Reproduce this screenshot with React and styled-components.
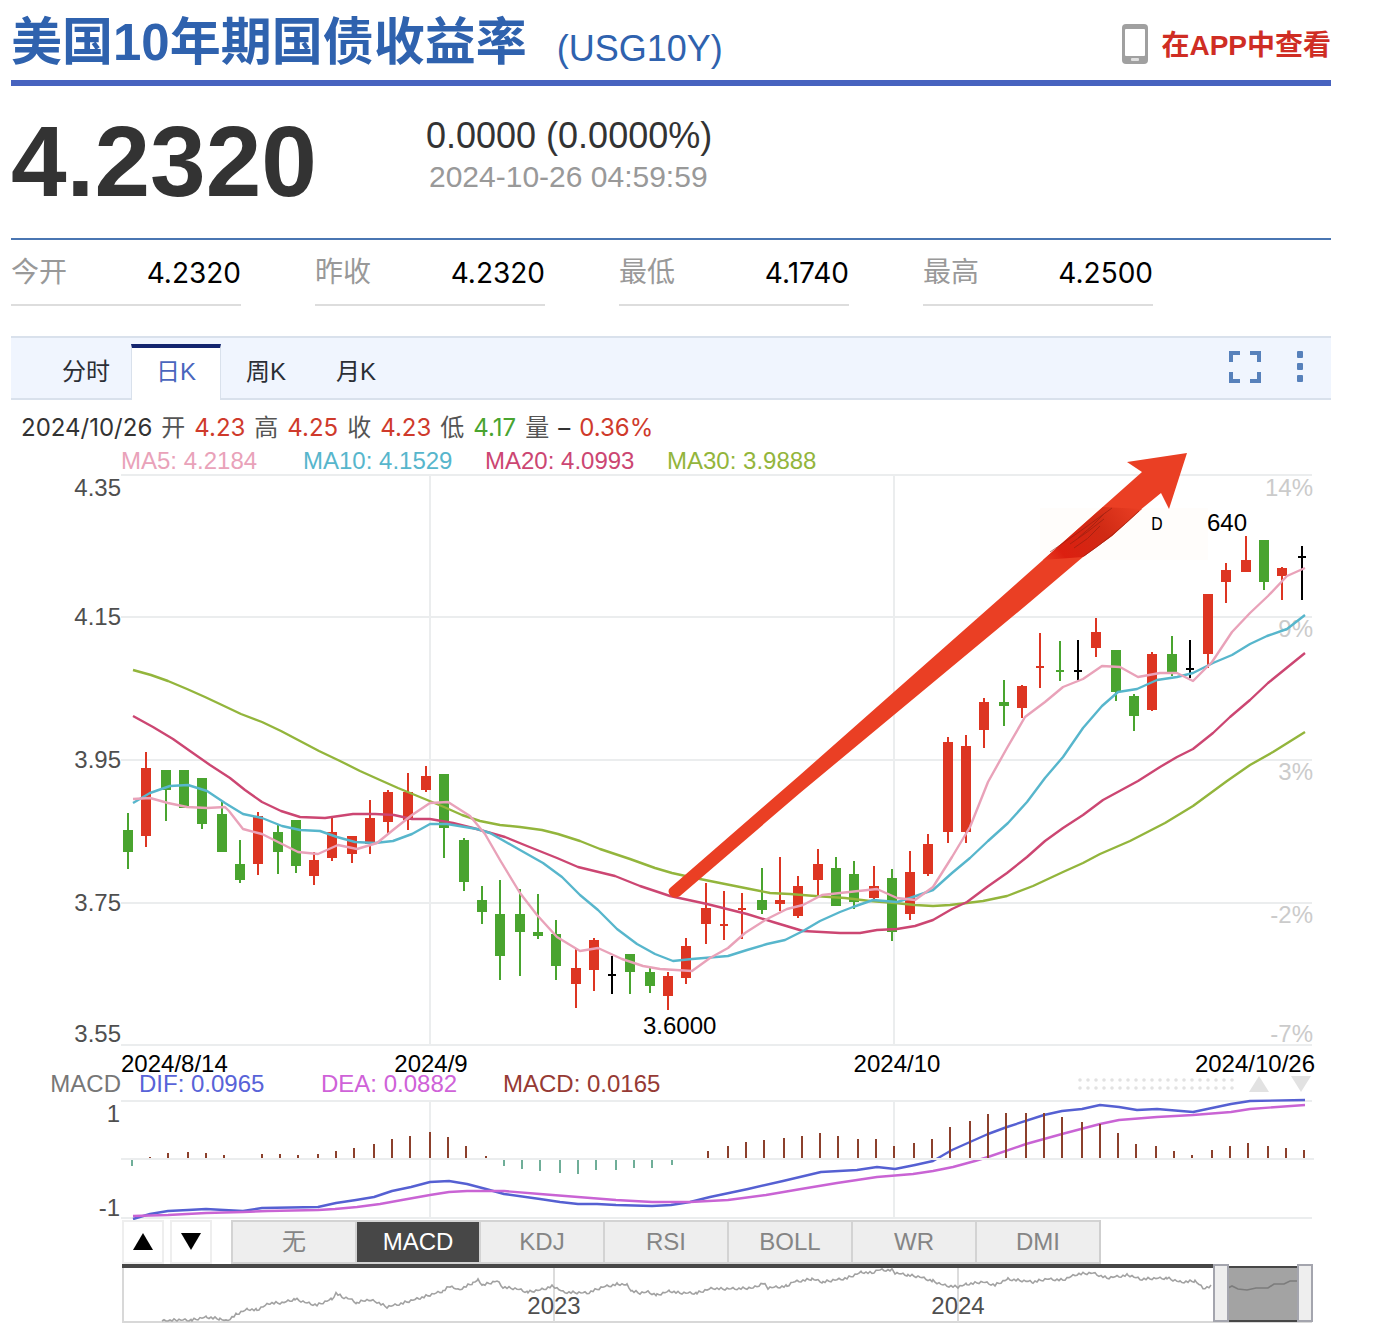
import React, { useState } from "react";
import styled, { createGlobalStyle } from "styled-components";

const RED = "#dd3522";
const GREEN = "#49a42f";
const BLACK = "#000000";

const GlobalStyle = createGlobalStyle`
  * {
    box-sizing: border-box;
  }

  body {
    margin: 0;
    background: #ffffff;
    font-family: "Liberation Sans", "Noto Sans CJK SC", sans-serif;
  }

  button {
    font-family: inherit;
    cursor: pointer;
  }
`;

const stats = [
  { label: "今开", value: "4.2320" },
  { label: "昨收", value: "4.2320" },
  { label: "最低", value: "4.1740" },
  { label: "最高", value: "4.2500" },
];

const periods = ["分时", "日K", "周K", "月K"];
const indicators = ["无", "MACD", "KDJ", "RSI", "BOLL", "WR", "DMI"];

const ohlc = [
  { text: "2024/10/26", color: "#333333" },
  { text: "开", color: "#555555" },
  { text: "4.23", color: "#cf3a2b" },
  { text: "高", color: "#555555" },
  { text: "4.25", color: "#cf3a2b" },
  { text: "收", color: "#555555" },
  { text: "4.23", color: "#cf3a2b" },
  { text: "低", color: "#555555" },
  { text: "4.17", color: "#49a42f" },
  { text: "量", color: "#555555" },
  { text: "–", color: "#333333" },
  { text: "0.36%", color: "#cf3a2b" },
];

const maLegend = [
  { text: "MA5: 4.2184", color: "#e9a2b9" },
  { text: "MA10: 4.1529", color: "#57b6cc" },
  { text: "MA20: 4.0993", color: "#cc4672" },
  { text: "MA30: 3.9888", color: "#93b53c" },
];

const macdLegend = [
  { text: "DIF: 0.0965", color: "#5863d8" },
  { text: "DEA: 0.0882", color: "#cf62d8" },
  { text: "MACD: 0.0165", color: "#963a34" },
];

// x, body top, body bottom, high, low, colour
const candles = [
  [128, 830, 852, 813, 869, GREEN],
  [146, 768, 836, 752, 847, RED],
  [166, 770, 790, 770, 821, GREEN],
  [184, 770, 808, 770, 808, GREEN],
  [202, 778, 824, 778, 829, GREEN],
  [222, 814, 852, 802, 852, GREEN],
  [240, 864, 880, 840, 883, GREEN],
  [258, 816, 864, 812, 875, RED],
  [278, 832, 852, 824, 874, GREEN],
  [296, 820, 866, 820, 873, GREEN],
  [314, 860, 876, 852, 885, RED],
  [332, 832, 858, 816, 861, RED],
  [352, 836, 854, 836, 863, RED],
  [370, 818, 844, 800, 854, RED],
  [388, 792, 822, 790, 833, RED],
  [408, 792, 820, 773, 830, RED],
  [426, 776, 790, 766, 792, RED],
  [444, 774, 828, 774, 858, GREEN],
  [464, 840, 882, 838, 891, GREEN],
  [482, 900, 912, 886, 924, GREEN],
  [500, 914, 956, 880, 980, GREEN],
  [520, 914, 932, 889, 976, GREEN],
  [538, 932, 936, 894, 939, GREEN],
  [556, 934, 966, 920, 980, GREEN],
  [576, 968, 984, 948, 1008, RED],
  [594, 940, 970, 938, 991, RED],
  [612, 974, 976, 956, 994, BLACK],
  [630, 954, 972, 954, 994, GREEN],
  [650, 972, 986, 968, 993, GREEN],
  [668, 976, 996, 972, 1010, RED],
  [686, 946, 978, 938, 984, RED],
  [706, 908, 924, 883, 944, RED],
  [724, 924, 926, 891, 940, RED],
  [742, 908, 910, 893, 939, RED],
  [762, 900, 910, 868, 914, GREEN],
  [780, 900, 904, 857, 911, RED],
  [798, 886, 916, 876, 918, RED],
  [818, 864, 880, 849, 898, RED],
  [836, 868, 906, 857, 906, GREEN],
  [854, 874, 902, 861, 909, GREEN],
  [874, 886, 898, 866, 902, RED],
  [892, 878, 932, 869, 941, GREEN],
  [910, 872, 914, 851, 920, RED],
  [928, 844, 874, 834, 876, RED],
  [948, 742, 832, 737, 843, RED],
  [966, 746, 832, 735, 843, RED],
  [984, 702, 730, 698, 748, RED],
  [1004, 702, 706, 680, 726, GREEN],
  [1022, 686, 708, 685, 718, RED],
  [1040, 666, 668, 633, 688, RED],
  [1060, 670, 672, 641, 681, GREEN],
  [1078, 670, 672, 640, 680, BLACK],
  [1096, 632, 648, 618, 657, RED],
  [1116, 650, 692, 650, 701, GREEN],
  [1134, 696, 716, 694, 731, GREEN],
  [1152, 654, 710, 652, 711, RED],
  [1172, 654, 672, 636, 676, GREEN],
  [1190, 668, 670, 640, 678, BLACK],
  [1208, 594, 654, 594, 668, RED],
  [1226, 570, 582, 563, 603, RED],
  [1246, 560, 572, 536, 572, RED],
  [1264, 540, 582, 540, 590, GREEN],
  [1282, 568, 576, 567, 600, RED],
  [1302, 556, 558, 546, 600, BLACK],
];

const ma30 =
  "133,670 151,675 168,681 187,689 205,697 222,705 241,714 262,722 281,731 300,741 319,751 340,761 360,771 380,780 398,788 415,795 432,802 444,807 462,815 480,821 500,825 520,827 542,830 558,834 580,841 600,849 630,859 655,868 672,873 690,877 720,883 750,889 770,893 790,894 815,896 845,898 870,901 895,903 915,905 933,906 950,905 967,903 983,901 1007,896 1033,886 1063,872 1083,863 1100,854 1130,841 1165,823 1193,806 1227,781 1250,765 1273,752 1305,732";
const ma20 =
  "133,716 153,727 173,739 190,751 210,765 230,778 245,790 262,802 281,811 300,817 325,818 353,814 375,814 394,815 412,819 430,819 453,823 473,828 505,837 527,846 557,858 578,867 615,876 640,886 670,896 707,904 747,914 773,922 803,931 840,933 860,933 877,930 897,929 915,926 933,920 952,909 967,902 987,887 1007,873 1027,857 1045,841 1063,828 1083,815 1103,800 1138,781 1160,767 1177,757 1193,749 1213,733 1230,717 1250,700 1268,683 1305,653";
const ma10 =
  "133,803 150,793 170,786 188,785 207,791 225,803 243,814 262,818 282,826 300,830 320,831 337,837 355,842 375,843 393,841 412,834 430,824 447,824 477,829 490,833 520,850 543,863 562,877 580,895 598,910 617,929 637,944 655,954 673,961 692,959 728,956 747,950 767,944 785,940 803,931 820,921 840,912 853,907 873,900 897,902 910,898 933,890 952,873 970,858 988,841 1008,823 1027,802 1045,778 1063,757 1083,728 1102,706 1118,692 1137,689 1157,680 1177,677 1193,673 1213,663 1232,655 1250,644 1267,636 1287,629 1305,615";
const ma5 =
  "133,799 150,798 168,803 187,807 207,808 225,807 229,811 243,829 262,834 280,843 298,852 318,854 338,845 357,849 377,843 393,830 412,815 430,803 448,802 470,816 485,834 500,860 520,893 537,915 557,937 580,951 598,948 622,959 643,966 660,969 692,971 710,958 728,948 745,933 767,919 787,909 803,905 822,895 840,893 877,889 897,898 915,900 933,887 952,857 970,827 988,782 1007,748 1025,717 1045,702 1063,687 1083,679 1102,666 1120,667 1138,677 1160,673 1177,673 1193,681 1212,662 1232,632 1250,613 1268,596 1287,576 1305,568";

// x, signed bar height
const macdBars = [
  [132, -6], [150, 1], [168, 5], [188, 6], [206, 5], [224, 3], [262, 4],
  [280, 4], [298, 3], [318, 4], [336, 7], [354, 10], [374, 14], [392, 19],
  [410, 22], [430, 26], [448, 21], [466, 12], [486, 2], [504, -6],
  [522, -9], [540, -11], [560, -13], [578, -14], [596, -10], [616, -10],
  [634, -8], [652, -8], [672, -5], [708, 7], [728, 12], [746, 16],
  [764, 18], [784, 20], [802, 22], [820, 25], [838, 22], [858, 19],
  [876, 19], [894, 12], [914, 15], [932, 19], [950, 31], [970, 37],
  [988, 44], [1006, 45], [1026, 45], [1044, 45], [1062, 41], [1082, 36],
  [1100, 34], [1118, 25], [1136, 14], [1156, 12], [1174, 7], [1192, 3],
  [1212, 8], [1230, 12], [1248, 15], [1268, 12], [1286, 10], [1304, 8],
];

const dif =
  "133,1219 150,1214 168,1211 188,1210 206,1209 224,1210 243,1211 262,1208 318,1207 336,1203 356,1200 374,1197 392,1191 411,1187 430,1182 449,1181 467,1184 486,1189 504,1194 540,1199 560,1202 578,1204 597,1204 616,1205 652,1206 671,1205 690,1202 710,1197 748,1189 783,1181 821,1172 857,1170 877,1167 895,1169 915,1165 933,1161 952,1150 970,1142 988,1134 1007,1127 1044,1115 1062,1111 1082,1109 1100,1105 1119,1107 1137,1110 1157,1109 1193,1112 1231,1104 1250,1101 1305,1100";
const dea =
  "133,1216 168,1215 206,1213 243,1212 268,1211 318,1210 335,1209 357,1207 380,1204 402,1200 430,1195 449,1192 467,1191 504,1191 540,1194 578,1197 616,1200 652,1202 690,1202 728,1200 766,1195 801,1189 837,1183 877,1177 913,1174 933,1171 953,1167 975,1161 988,1157 1026,1144 1062,1134 1100,1124 1119,1120 1157,1117 1193,1115 1231,1112 1250,1109 1305,1105";

const history = [
  [162, 1321], [177, 1320], [192, 1320], [207, 1317], [220, 1319], [226, 1321],
  [237, 1314], [248, 1309], [257, 1310], [270, 1303], [282, 1303], [295, 1299],
  [307, 1303], [317, 1305], [332, 1299], [336, 1293], [342, 1297], [350, 1299],
  [357, 1303], [365, 1300], [375, 1301], [387, 1307], [403, 1303], [420, 1298],
  [443, 1291], [450, 1286], [458, 1290], [473, 1283], [478, 1280], [483, 1285],
  [497, 1281], [503, 1287], [517, 1289], [528, 1292], [540, 1290], [553, 1286],
  [563, 1292], [587, 1293], [603, 1287], [618, 1284], [627, 1285], [632, 1291],
  [640, 1293], [648, 1292], [657, 1295], [670, 1291], [680, 1293], [697, 1293],
  [713, 1288], [723, 1289], [753, 1288], [763, 1283], [768, 1288], [787, 1286],
  [793, 1282], [812, 1279], [823, 1282], [847, 1278], [862, 1272], [872, 1273],
  [878, 1270], [893, 1270], [895, 1273], [908, 1275], [920, 1277], [933, 1281],
  [943, 1285], [958, 1287], [967, 1284], [983, 1282], [995, 1285], [1008, 1279],
  [1033, 1282], [1047, 1279], [1063, 1280], [1077, 1274], [1093, 1273],
  [1107, 1278], [1128, 1275], [1140, 1279], [1167, 1278], [1180, 1282],
  [1195, 1281], [1203, 1288], [1213, 1286],
];

const noise = [0, -1.1, 0.7, 1.2, -0.5, 0.9, -1.3, 0.3, 1.1, -0.8, 0.2];

const historyLine = () => {
  const points = [];
  let n = 0;
  for (let i = 0; i < history.length - 1; i++) {
    const [x1, y1] = history[i];
    const [x2, y2] = history[i + 1];
    for (let x = x1; x < x2; x += 2) {
      const y = y1 + ((y2 - y1) * (x - x1)) / (x2 - x1);
      points.push(`${x},${Math.min(1321, y + noise[n % noise.length])}`);
      n += 1;
    }
  }
  return points.join(" ");
};

const Candle = ({ data }) => {
  const [x, top, bottom, high, low, color] = data;
  const half = bottom - top > 2 ? 5 : 4;
  return (
    <g fill={color}>
      <rect x={x - 1} y={high} width="2" height={low - high} />
      <rect x={x - half} y={top} width={half * 2} height={bottom - top} />
    </g>
  );
};

const PriceChart = () => (
  <Plot viewBox="11 474 1320 598">
    <g stroke="#ebedee" strokeWidth="2">
      {[475, 617, 760, 903, 1045].map((y) => (
        <line key={y} x1="121" x2="1312" y1={y} y2={y} />
      ))}
      <line x1="430" x2="430" y1="475" y2="1045" />
      <line x1="894" x2="894" y1="475" y2="1045" />
    </g>
    <g fill="#4f4f4f" textAnchor="end">
      <text x="121" y="496">4.35</text>
      <text x="121" y="625">4.15</text>
      <text x="121" y="768">3.95</text>
      <text x="121" y="911">3.75</text>
      <text x="121" y="1042">3.55</text>
    </g>
    <g fill="#cbcbcb" textAnchor="end">
      <text x="1313" y="496">14%</text>
      <text x="1313" y="637">9%</text>
      <text x="1313" y="780">3%</text>
      <text x="1313" y="923">-2%</text>
      <text x="1313" y="1042">-7%</text>
    </g>
    <rect x="1040" y="508" width="168" height="52" fill="#fffdfb" />
    {candles.map((c) => (
      <Candle key={c[0]} data={c} />
    ))}
    <g fill="none" strokeWidth="2.4" strokeLinejoin="round">
      <polyline points={ma30} stroke="#93b53c" />
      <polyline points={ma20} stroke="#cc4672" />
      <polyline points={ma10} stroke="#57b6cc" />
      <polyline points={ma5} stroke="#e9a2b9" />
    </g>
    <TrendArrow />
    <g fill="#000000">
      <text x="643" y="1034">3.6000</text>
      <text x="1207" y="531">640</text>
      <SmallMark x="1151" y="530">D</SmallMark>
      <text x="121" y="1072">2024/8/14</text>
      <text x="431" y="1072" textAnchor="middle">2024/9</text>
      <text x="897" y="1072" textAnchor="middle">2024/10</text>
      <text x="1315" y="1072" textAnchor="end">2024/10/26</text>
    </g>
  </Plot>
);

const TrendArrow = () => (
  <g>
    <defs>
      <linearGradient
        id="smudge"
        gradientUnits="userSpaceOnUse"
        x1="1044"
        y1="566"
        x2="1136"
        y2="500"
      >
        <stop offset="0" stopColor="#ea3f24" />
        <stop offset="0.2" stopColor="#dc1f10" />
        <stop offset="0.6" stopColor="#d02a14" />
        <stop offset="1" stopColor="#ea3f24" />
      </linearGradient>
    </defs>
    <path
      d="M670 888 L800 775 L998 600 L1142 472 L1127 462 L1187 453 L1169 509 L1161 493 L1139 511 L1112 536 L1083 557 L1030 602 L800 793 L680 896 Q674 900 670 895 Q667 891 670 888 Z"
      fill="#ea3f24"
    />
    <path
      d="M1043 560 L1103 507 L1142 509 L1112 536 L1083 557 Z"
      fill="url(#smudge)"
    />
    <g stroke="#8f1e10" strokeWidth="1" fill="none" opacity="0.6">
      <path d="M1050 552 Q1080 532 1112 508" />
      <path d="M1078 538 Q1092 527 1106 512" />
      <path d="M1070 544 Q1088 532 1104 519" />
      <path d="M1074 548 Q1088 540 1100 526" />
      <path d="M1084 556 Q1112 537 1139 511" />
    </g>
  </g>
);

const MacdChart = () => (
  <Plot viewBox="11 1096 1320 124">
    <g stroke="#ebedee" strokeWidth="2">
      <line x1="121" x2="1312" y1="1101" y2="1101" />
      <line x1="121" x2="1312" y1="1218" y2="1218" />
      <line x1="430" x2="430" y1="1101" y2="1218" />
      <line x1="894" x2="894" y1="1101" y2="1218" />
    </g>
    <g fill="#4f4f4f" textAnchor="end">
      <text x="120" y="1122">1</text>
      <text x="120" y="1216">-1</text>
    </g>
    <g fill="none" strokeWidth="2.4" strokeLinejoin="round">
      <polyline points={dif} stroke="#5560d2" />
      <polyline points={dea} stroke="#c964d4" />
    </g>
    <rect x="121" y="1158" width="1193" height="2" fill="#ebedee" />
    {macdBars.map(([x, h]) => (
      <rect
        key={x}
        x={x - 1}
        y={h > 0 ? 1158 - h : 1160}
        width="2"
        height={Math.abs(h)}
        fill={h > 0 ? "#8c402c" : "#6fae98"}
      />
    ))}
  </Plot>
);

const HistoryChart = () => (
  <Plot viewBox="122 1264 1190 59">
    <path d="M123 1268 V1322 H1312" stroke="#d8d8d8" strokeWidth="2" fill="none" />
    <rect x="122" y="1264" width="1092" height="4" fill="#474747" />
    <line x1="554" x2="554" y1="1268" y2="1322" stroke="#dcdcdc" strokeWidth="2" />
    <line x1="958" x2="958" y1="1268" y2="1322" stroke="#dcdcdc" strokeWidth="2" />
    <rect x="1227" y="1266" width="72" height="56" fill="#a3a3a3" />
    <rect x="1227" y="1266" width="72" height="2" fill="#474747" />
    <rect x="1227" y="1320" width="72" height="2" fill="#474747" />
    <polyline points={historyLine()} fill="none" stroke="#a2a2a2" strokeWidth="1.6" />
    <polyline
      points="1228,1288 1232,1286 1238,1289 1247,1290 1256,1288 1268,1288 1274,1284 1284,1284 1290,1281 1297,1281"
      fill="none"
      stroke="#7c7c7c"
      strokeWidth="1.6"
    />
    <g fill="#4f4f4f" textAnchor="middle">
      <text x="554" y="1314">2023</text>
      <text x="958" y="1314">2024</text>
    </g>
    <g fill="#eeeeee" stroke="#a4a5ae" strokeWidth="2">
      <rect x="1214" y="1265" width="14" height="56" />
      <rect x="1298" y="1265" width="14" height="56" />
    </g>
  </Plot>
);

const PhoneIcon = () => (
  <svg width="28" height="42" viewBox="0 0 28 42" aria-hidden="true">
    <path
      d="M5 1 H23 Q27 1 27 5 V37 Q27 41 23 41 H5 Q1 41 1 37 V5 Q1 1 5 1 Z"
      fill="#a0a0a0"
    />
    <rect x="4" y="6" width="20" height="27" rx="1" fill="#ffffff" />
    <rect x="10" y="35" width="8" height="3" rx="1" fill="#e0e0e0" />
  </svg>
);

const App = () => {
  const [period, setPeriod] = useState("日K");
  const [indicator, setIndicator] = useState("MACD");

  return (
    <Page>
      <GlobalStyle />
      <Header>
        <Title>
          美国10年期国债收益率 <Symbol>(USG10Y)</Symbol>
        </Title>
        <AppLink href="#app">
          <PhoneIcon />
          在APP中查看
        </AppLink>
      </Header>

      <Quote>
        <Price>4.2320</Price>
        <div>
          <Change>0.0000 (0.0000%)</Change>
          <QuoteTime>2024-10-26 04:59:59</QuoteTime>
        </div>
      </Quote>

      <Stats>
        {stats.map((s) => (
          <Stat key={s.label}>
            <dt>{s.label}</dt>
            <dd>{s.value}</dd>
          </Stat>
        ))}
      </Stats>

      <TabBar>
        {periods.map((p) => (
          <Tab key={p} $active={p === period} onClick={() => setPeriod(p)}>
            {p}
          </Tab>
        ))}
        <Tools>
          <IconButton aria-label="全屏">
            <svg width="34" height="34" viewBox="0 0 34 34">
              <path
                d="M3 12 V3 H12 M22 3 H31 V12 M31 22 V31 H22 M12 31 H3 V22"
                fill="none"
                stroke="#5781bb"
                strokeWidth="4"
              />
            </svg>
          </IconButton>
          <IconButton aria-label="更多">
            <svg width="8" height="34" viewBox="0 0 8 34" fill="#5781bb">
              <rect x="1" y="1" width="6" height="7" rx="1" />
              <rect x="1" y="13" width="6" height="7" rx="1" />
              <rect x="1" y="25" width="6" height="7" rx="1" />
            </svg>
          </IconButton>
        </Tools>
      </TabBar>

      <Ohlc>
        {ohlc.map((o, i) => (
          <Colored key={i} $color={o.color}>
            {o.text}
          </Colored>
        ))}
      </Ohlc>
      <MaLegend>
        {maLegend.map((m) => (
          <Colored key={m.text} $color={m.color}>
            {m.text}
          </Colored>
        ))}
      </MaLegend>
      <PriceChart />

      <MacdHeader>
        <PanelName>MACD</PanelName>
        {macdLegend.map((m) => (
          <Colored key={m.text} $color={m.color}>
            {m.text}
          </Colored>
        ))}
        <svg width="234" height="16" viewBox="0 0 234 16" fill="#e2e2e2" aria-hidden="true">
          {Array.from({ length: 20 }, (_, i) => (
            <g key={i}>
              <circle cx={2 + i * 8} cy="4" r="1.8" />
              <circle cx={2 + i * 8} cy="12" r="1.8" />
            </g>
          ))}
          <path d="M171 16 L181 0 L191 16 Z" />
          <path d="M213 0 H233 L223 16 Z" />
        </svg>
      </MacdHeader>
      <MacdChart />

      <Footer>
        <IndicatorBar>
          <StepButton aria-label="上一个">
            <svg width="20" height="18" viewBox="0 0 20 18">
              <path d="M10 0 L20 17 H0 Z" />
            </svg>
          </StepButton>
          <StepButton aria-label="下一个">
            <svg width="20" height="18" viewBox="0 0 20 18">
              <path d="M0 0 H20 L10 17 Z" />
            </svg>
          </StepButton>
          <IndicatorTabs>
            {indicators.map((name) => (
              <IndicatorTab
                key={name}
                $active={name === indicator}
                onClick={() => setIndicator(name)}
              >
                {name}
              </IndicatorTab>
            ))}
          </IndicatorTabs>
        </IndicatorBar>
        <HistoryChart />
      </Footer>
    </Page>
  );
};

const Page = styled.main`
  padding: 0 57px 20px 11px;
  font-size: 24px;
  line-height: 28px;
`;

const Header = styled.header`
  display: flex;
  justify-content: space-between;
  align-items: center;
  height: 86px;
  border-bottom: 6px solid #4763bf;
`;

const Title = styled.h1`
  display: flex;
  align-items: flex-end;
  gap: 30px;
  margin: 0;
  padding-top: 6px;
  font-size: 51px;
  line-height: 74px;
  color: #2f62ae;
`;

const Symbol = styled.span`
  font-size: 36px;
  font-weight: 400;
  line-height: 62px;
`;

const AppLink = styled.a`
  display: flex;
  align-items: flex-end;
  gap: 12px;
  padding-top: 8px;
  font-size: 28px;
  font-weight: 700;
  line-height: 38px;
  color: #cf2d24;
  text-decoration: none;
`;

const Quote = styled.section`
  display: grid;
  grid-template-columns: 415px 1fr;
  padding: 30px 0 31px;
  border-bottom: 2px solid #4a76b2;
`;

const Price = styled.strong`
  font-size: 100px;
  line-height: 91px;
  color: #333333;
`;

const Change = styled.div`
  font-size: 36px;
  line-height: 40px;
  color: #333333;
`;

const QuoteTime = styled.time`
  display: block;
  padding-left: 3px;
  font-size: 30px;
  line-height: 42px;
  color: #999999;
`;

const Stats = styled.dl`
  display: flex;
  gap: 74px;
  margin: 0 0 30px;
`;

const Stat = styled.div`
  display: flex;
  justify-content: space-between;
  width: 230px;
  padding-top: 2px;
  border-bottom: 2px solid #dddddd;
  font-size: 28px;
  line-height: 62px;

  dt {
    color: #999999;
  }

  dd {
    margin: 0;
    font-family: Inter, sans-serif;
    color: #000000;
  }
`;

const TabBar = styled.nav`
  display: flex;
  align-items: flex-end;
  height: 64px;
  padding-left: 30px;
  border-top: 2px solid #d9e1ec;
  background: #f0f5fe;
  box-shadow: inset 0 -2px #d9e1ec;
`;

const Tab = styled.button`
  width: 90px;
  height: 56px;
  padding: 0 0 9px;
  border: solid ${(p) => (p.$active ? "#d9e1ec" : "transparent")};
  border-width: 0 1px;
  border-top: 4px solid ${(p) => (p.$active ? "#14256f" : "transparent")};
  background: ${(p) => (p.$active ? "#ffffff" : "transparent")};
  font-size: 24px;
  color: ${(p) => (p.$active ? "#4a66bd" : "#2b2e35")};
`;

const Tools = styled.div`
  display: flex;
  align-items: center;
  align-self: center;
  gap: 34px;
  margin-left: auto;
  padding: 0 27px 5px 0;
`;

const IconButton = styled.button`
  padding: 0;
  border: 0;
  background: none;

  svg {
    display: block;
  }
`;

const Colored = styled.span`
  color: ${(p) => p.$color};
`;

const Ohlc = styled.div`
  display: flex;
  gap: 9px;
  padding: 9px 0 0 10px;
  font-family: Inter, "Noto Sans CJK SC", sans-serif;
  font-size: 24px;
  line-height: 38px;
`;

const MaLegend = styled.div`
  display: grid;
  grid-template-columns: repeat(4, 182px);
  padding-left: 110px;
  line-height: 27px;
`;

const Plot = styled.svg`
  display: block;
  width: 100%;
  height: auto;
  overflow: visible;
  font-size: 24px;
`;

const SmallMark = styled.text`
  font-family: "Liberation Sans Narrow", "DejaVu Sans Condensed", sans-serif;
  font-size: 17px;
`;

const MacdHeader = styled.div`
  display: grid;
  grid-template-columns: 110px 182px 182px 1fr auto;
  align-items: center;
  padding-right: 19px;
  line-height: 24px;

  ${Colored} {
    padding-left: 18px;
  }
`;

const PanelName = styled.span`
  text-align: right;
  color: #777777;
`;

const Footer = styled.footer`
  margin: 0 19px 0 111px;
`;

const IndicatorBar = styled.div`
  display: flex;
  gap: 6px;
  height: 44px;
`;

const StepButton = styled.button`
  display: flex;
  align-items: center;
  justify-content: center;
  width: 42px;
  padding: 0;
  border: 2px solid #eeeeee;
  background: #ffffff;
`;

const IndicatorTabs = styled.div`
  display: flex;
  margin-left: 13px;
  border-right: 2px solid #cfcfcf;
`;

const IndicatorTab = styled.button`
  width: 124px;
  padding: 0;
  border: 2px solid #d3d3d3;
  border-right: 0;
  background: ${(p) => (p.$active ? "#474747" : "#eeeeee")};
  font-size: 24px;
  line-height: 36px;
  color: ${(p) => (p.$active ? "#ffffff" : "#858585")};
`;

export default App;
